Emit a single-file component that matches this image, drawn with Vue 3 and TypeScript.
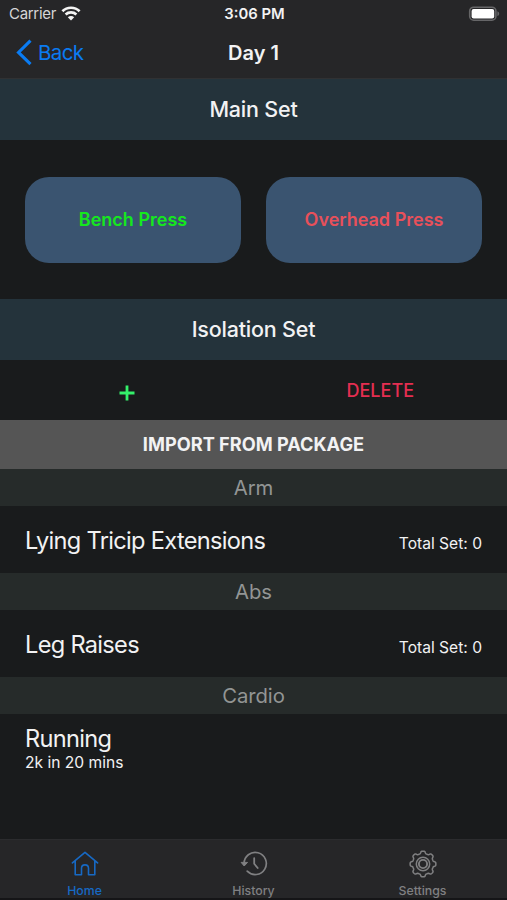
<script setup lang="ts">
interface Exercise {
  group: string
  name: string
  total?: string
  note?: string
}

const lifts = [
  { name: 'Bench Press', done: true },
  { name: 'Overhead Press', done: false },
]

const exercises: Exercise[] = [
  { group: 'Arm', name: 'Lying Tricip Extensions', total: 'Total Set: 0' },
  { group: 'Abs', name: 'Leg Raises', total: 'Total Set: 0' },
  { group: 'Cardio', name: 'Running', note: '2k in 20 mins' },
]

// Outline of the settings gear: eight rounded teeth around a circle.
function gearPath(cx: number, cy: number): string {
  const points: string[] = []
  for (let i = 0; i <= 144; i++) {
    const a = (i / 144) * Math.PI * 2
    const wave = Math.tanh(2.2 * Math.cos(8 * a))
    const r = 11.7 + 1.2 * wave
    points.push(`${(cx + r * Math.sin(a)).toFixed(2)} ${(cy - r * Math.cos(a)).toFixed(2)}`)
  }
  return `M${points.join('L')}Z`
}
const gear = gearPath(14, 14)
</script>

<template>
  <div class="screen">
    <header class="top">
      <div class="status">
        <div class="carrier">
          <span>Carrier</span>
          <svg width="20" height="15" viewBox="0 0 20 15" fill="none" stroke="#f4f4f4">
            <path d="M1.4 5.2C6.1.6 13.9.6 18.6 5.2" stroke-width="2.7" />
            <path d="M4.6 8.5c3-2.8 7.8-2.8 10.8 0" stroke-width="2.6" />
            <path d="M10 14.4l-3.2-3.2c1.8-1.6 4.6-1.6 6.4 0z" fill="#f4f4f4" stroke="none" />
          </svg>
        </div>
        <span class="time">3:06 PM</span>
        <svg class="battery" width="32" height="16" viewBox="0 0 32 16">
          <rect x="1.7" y="1.2" width="26.2" height="13" rx="4" fill="#252527" stroke="#666668" stroke-width="1.6" />
          <rect x="3.6" y="3" width="22.6" height="9.4" rx="2" fill="#fff" />
          <path d="M29.4 5.2c2.4.8 2.4 4 0 4.8z" fill="#666668" />
        </svg>
      </div>
      <nav class="nav">
        <button class="back">
          <svg width="17" height="27" viewBox="0 0 17 27" fill="none" stroke="#0a7bf2" stroke-width="3.1">
            <path d="M15.5 1.6L3.5 13.4 15.5 25.2" />
          </svg>
          <span>Back</span>
        </button>
        <h1>Day 1</h1>
      </nav>
    </header>

    <h2 class="section">Main Set</h2>
    <div class="lifts">
      <button v-for="lift in lifts" :key="lift.name" class="lift" :class="{ done: lift.done }">
        {{ lift.name }}
      </button>
    </div>

    <h2 class="section">Isolation Set</h2>
    <div class="actions">
      <button class="add" aria-label="Add">
        <svg width="16" height="16" viewBox="0 0 16 16" stroke="#34f06a" stroke-width="2.8">
          <path d="M8 .5v15M.5 8h15" />
        </svg>
      </button>
      <button class="delete">DELETE</button>
    </div>
    <button class="import">IMPORT FROM PACKAGE</button>

    <main class="list">
      <section v-for="item in exercises" :key="item.group">
        <h3 class="group">{{ item.group }}</h3>
        <div v-if="item.total" class="row">
          <span class="name">{{ item.name }}</span>
          <span class="total">{{ item.total }}</span>
        </div>
        <div v-else class="cardio-row">
          <span class="name">{{ item.name }}</span>
          <span class="note">{{ item.note }}</span>
        </div>
      </section>
    </main>

    <footer class="tabs">
      <a class="tab active">
        <svg width="28" height="28" viewBox="0 0 28 28" fill="none" stroke="currentColor" stroke-width="1.6" stroke-linecap="round" stroke-linejoin="round">
          <path d="M1.4 12.9L14 2.3l12.6 10.6M4.2 11v13.7h6.3v-6.4c0-4.6 7-4.6 7 0v6.4h6.3V11" />
        </svg>
        <span>Home</span>
      </a>
      <a class="tab">
        <svg width="28" height="28" viewBox="0 0 28 28" fill="none" stroke="currentColor" stroke-width="1.7" stroke-linecap="round" stroke-linejoin="round">
          <path d="M4.1 13.7A11.1 11.1 0 1 1 7.2 21.2" />
          <path d="M1.4 12.7l2.8 3.3 3.1-3.3z" fill="currentColor" stroke-width="1" />
          <path d="M14.2 8.2v5.5l3.5 4.3" stroke-width="1.8" />
        </svg>
        <span>History</span>
      </a>
      <a class="tab">
        <svg width="28" height="28" viewBox="0 0 28 28" fill="none" stroke="currentColor" stroke-width="1.5">
          <path :d="gear" stroke-linejoin="round" />
          <circle cx="14" cy="14" r="6.7" />
          <circle cx="14" cy="14" r="4.1" stroke-width="1.9" />
        </svg>
        <span>Settings</span>
      </a>
    </footer>
  </div>
</template>

<style>
body {
  background: #191b1c;
}
</style>

<style scoped>
.screen {
  box-sizing: border-box;
  width: 100%;
  height: 900px;
  display: flex;
  flex-direction: column;
  overflow: hidden;
  background: #191b1c;
  color: #f2f2f3;
  font-family: Inter, 'Liberation Sans', sans-serif;
}
h1,
h2,
h3 {
  margin: 0;
  font-weight: 500;
}
button {
  margin: 0;
  padding: 0;
  border: 0;
  background: none;
  font: inherit;
  color: inherit;
}
svg {
  display: block;
  flex: none;
}
.top {
  box-sizing: border-box;
  height: 79px;
  flex: none;
  background: #262628;
  border-bottom: 1px solid #303133;
}
.status {
  display: grid;
  grid-template-columns: 1fr auto 1fr;
  align-items: center;
  height: 27px;
  padding: 0 7px 0 9px;
  font-size: 15px;
}
.carrier {
  display: flex;
  align-items: center;
  gap: 5px;
  color: #d6d6d7;
  letter-spacing: -0.3px;
}
.carrier svg {
  margin-top: -1px;
}
.time {
  font-weight: 600;
  font-size: 14.8px;
}
.battery {
  justify-self: end;
}
.nav {
  display: grid;
  grid-template-columns: 1fr auto 1fr;
  align-items: center;
  height: 50px;
  padding: 0 15px;
}
.back {
  display: flex;
  align-items: center;
  gap: 6px;
  color: #0a7bf2;
  font-size: 20.5px;
  letter-spacing: -0.6px;
}
h1 {
  padding-top: 2px;
  font-size: 20px;
  font-weight: 600;
}
.section {
  box-sizing: border-box;
  height: 61px;
  padding-bottom: 2px;
  flex: none;
  display: flex;
  align-items: center;
  justify-content: center;
  background: #24333b;
  font-size: 21.5px;
  letter-spacing: -0.2px;
}
.lifts {
  height: 159px;
  box-sizing: border-box;
  flex: none;
  display: flex;
  gap: 25px;
  padding: 37px 25px 36px;
}
.lift {
  flex: 1;
  padding-bottom: 1px;
  border-radius: 24px;
  background: #3a5470;
  color: #e8505a;
  font-size: 18px;
  font-weight: 600;
}
.lift.done {
  color: #15e81e;
}
.actions {
  height: 60px;
  flex: none;
  display: grid;
  grid-template-columns: 1fr 1fr;
}
.add {
  display: flex;
  align-items: center;
  justify-content: center;
  padding-top: 5px;
}
.delete {
  padding-top: 1px;
  color: #e52e51;
  font-size: 18px;
  font-weight: 500;
}
.import {
  height: 49px;
  padding-bottom: 2px;
  flex: none;
  background: #555;
  font-size: 18.2px;
  font-weight: 700;
}
.list {
  flex: 1;
}
.group {
  height: 37px;
  display: flex;
  align-items: center;
  justify-content: center;
  background: #262b2a;
  color: #929594;
  font-size: 20.3px;
  letter-spacing: -0.1px;
  font-weight: 400;
}
.row {
  height: 67px;
  box-sizing: border-box;
  display: flex;
  align-items: baseline;
  justify-content: space-between;
  padding: 21px 25px 0;
}
.name {
  font-size: 23.6px;
  line-height: 28px;
  letter-spacing: -0.7px;
}
.total,
.note {
  font-size: 15.6px;
}
.cardio-row {
  display: flex;
  flex-direction: column;
  padding: 11px 25px 0;
}
.note {
  line-height: 20px;
}
.tabs {
  height: 61px;
  box-sizing: border-box;
  flex: none;
  display: grid;
  grid-template-columns: repeat(3, 1fr);
  background: #262628;
  border-top: 1px solid #2b2c2e;
  border-bottom: 2px solid #151517;
}
.tab {
  display: flex;
  flex-direction: column;
  align-items: center;
  padding-top: 10px;
  gap: 5px;
  color: #808082;
  font-size: 12.3px;
  line-height: 16px;
  font-weight: 500;
}
.tab.active {
  color: #1769c4;
}
</style>
